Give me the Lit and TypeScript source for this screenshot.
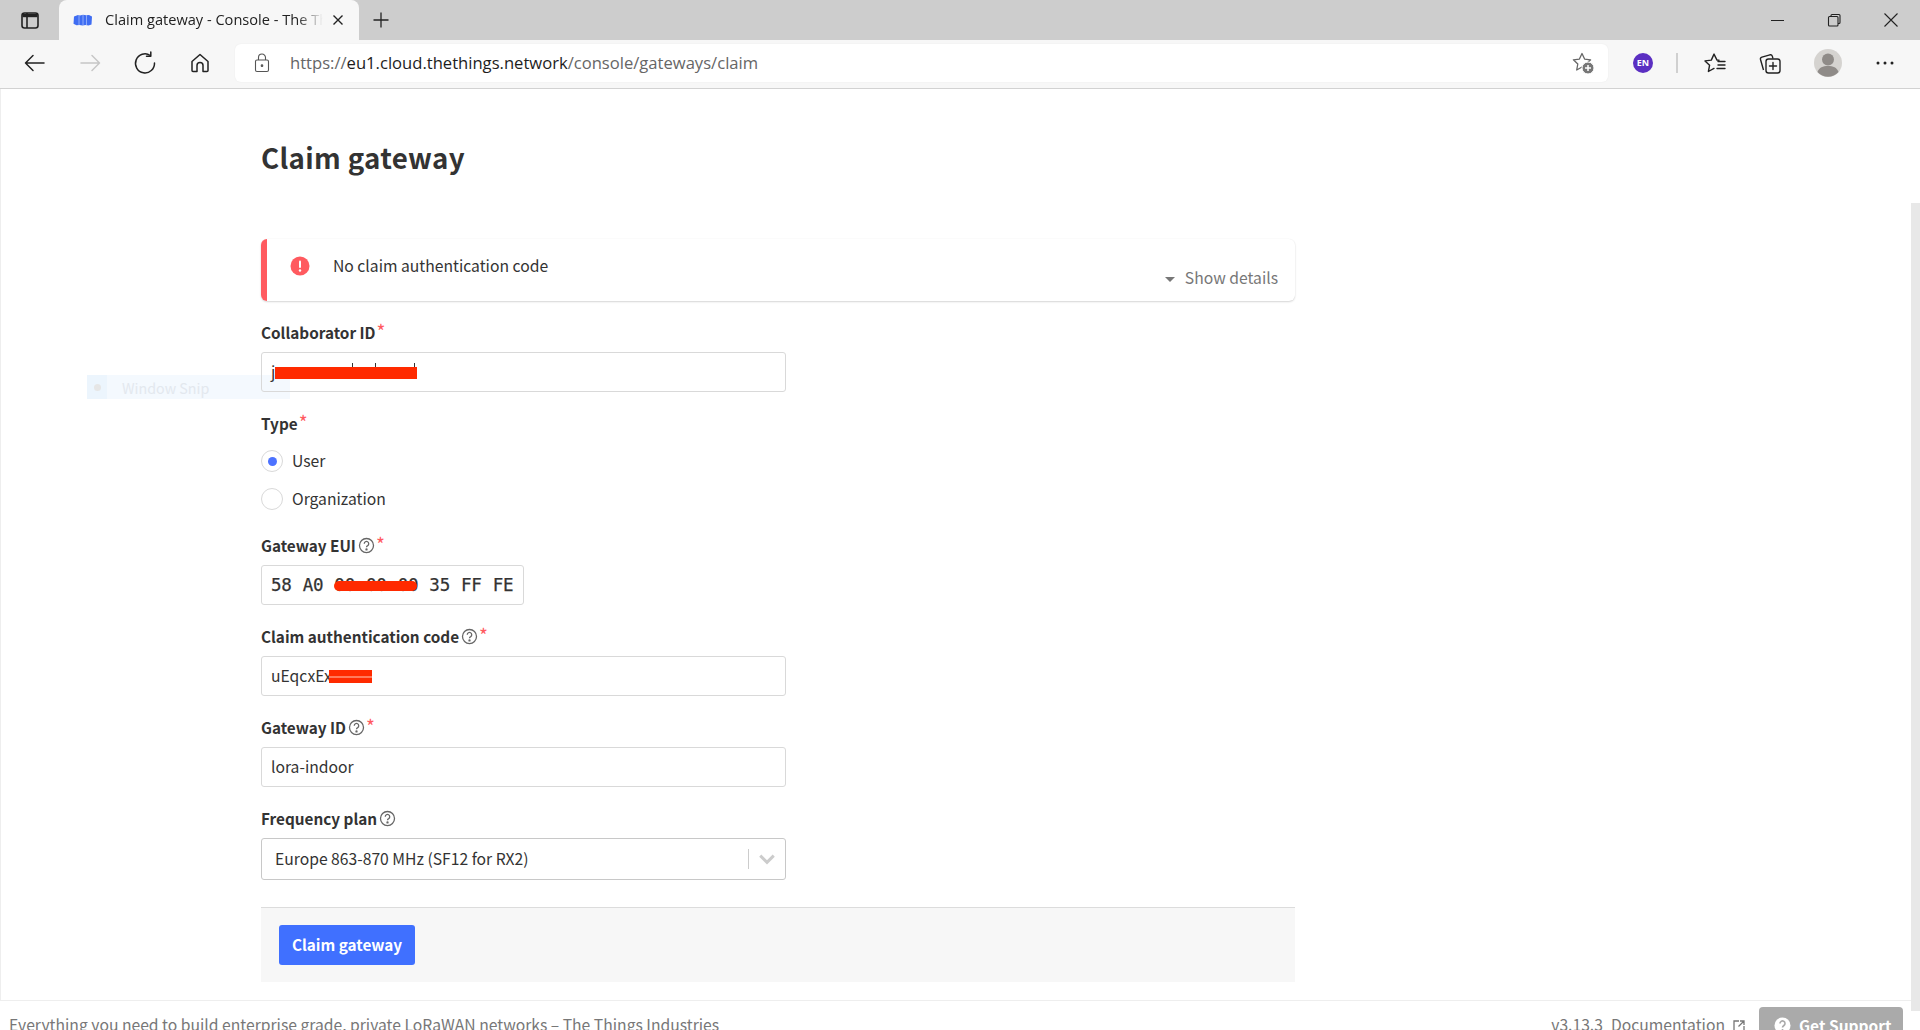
import { LitElement, html, css, svg } from "lit";
import { customElement } from "lit/decorators.js";

const helpIcon = html`<svg class="help" viewBox="0 0 16 16" fill="none" stroke="#666" stroke-width="1.200"><circle cx="8" cy="8" r="6.600"/><path d="M5.900 6.300a2.100 2.100 0 1 1 3.200 1.800c-.7.400-1.100.8-1.100 1.600"/><circle cx="8" cy="11.700" r=".5" fill="#666"/></svg>`;

const ic = (body: unknown, size = 24) => html`<svg width=${size} height=${size} viewBox="0 0 24 24" fill="none" stroke="#222" stroke-width="1.5" stroke-linecap="round" stroke-linejoin="round">${body}</svg>`;

@customElement("app-root")
export class AppRoot extends LitElement {
  static styles = css`
    :host { display: block; width: 1920px; height: 1030px; overflow: hidden; position: relative; background: #fff; font-family: "Noto Sans CJK SC", "Noto Sans", sans-serif; color: #333; }
    * { box-sizing: border-box; }
    .tabstrip { height: 40px; background: #cdcdcd; display: flex; align-items: stretch; }
    .sidebtn { width: 59px; display: flex; align-items: center; justify-content: center; }
    .tab { width: 300px; background: #f7f7f7; border-radius: 8px 8px 0 0; display: flex; align-items: center; padding-left: 14px; font: 14.600px/20px "Open Sans", "Noto Sans", sans-serif; color: #222; }
    .favicon { width: 20px; height: 12px; flex: none; }
    .tabtitle { margin-left: 12px; margin-top: -2px; width: 218px; white-space: nowrap; overflow: hidden; -webkit-mask-image: linear-gradient(90deg, #000 88%, transparent 100%); mask-image: linear-gradient(90deg, #000 88%, transparent 100%); }
    .tabclose { margin-left: 8px; display: flex; }
    .newtab { margin-left: 12px; width: 24px; display: flex; align-items: center; }
    .winctl { margin-left: auto; display: flex; align-items: center; padding-right: 1px; }
    .winctl div { width: 57px; display: flex; justify-content: center; }

    .toolbar { height: 49px; background: #f7f7f7; border-bottom: 1px solid #d2d2d2; display: flex; align-items: center; padding: 0 0 3px 12px; }
    .tb { width: 44px; height: 38px; display: flex; align-items: center; justify-content: center; flex: none; }
    .tb.g1 { margin-left: 13px; }
    .tb.g2 { margin-left: 10px; }
    .tb.g3 { margin-left: 11px; }
    .urlbox { margin-left: 13px; width: 1373px; height: 38px; background: #fff; border-radius: 6px; display: flex; align-items: center; padding-left: 18px; padding-right: 13px; box-shadow: 0 0 2px rgba(0,0,0,.06); }
    .url { margin-left: 19px; padding-top: 1px; font: 16.600px/22px "Open Sans", "Noto Sans", sans-serif; color: #666; white-space: nowrap; }
    .url b { font-weight: 400; color: #1d1d1d; }
    .star { margin-left: auto; display: flex; }
    .tools { display: flex; align-items: center; gap: 15px; margin-left: 15px; }
    .tool { width: 40px; display: flex; justify-content: center; align-items: center; }
    .en { width: 20px; height: 20px; border-radius: 50%; background: #5b2fc2; color: #fff; font: 700 9px/20px "Open Sans", sans-serif; text-align: center; }
    .divider { width: 2px; height: 20px; background: #d0d0d0; margin: 0 2px 0 -2px; }
    .av { margin-left: 3px; }
    .dots { margin-left: 2px; }

    .page { height: 911px; border-left: 1px solid #eee; padding: 0 0 0 260px; position: relative; }
    h1 { margin: 0; padding-top: 48px; height: 150px; font-size: 27.700px; line-height: 40px; font-weight: 600; letter-spacing: .35px; color: #333; }
    .column { width: 1034px; }
    .note { width: 1034px; height: 62px; border-left: 6px solid #ff5a5f; border-radius: 6px; box-shadow: 0 1px 2px rgba(0,0,0,.16), 0 0 1px rgba(0,0,0,.08); position: relative; display: flex; padding: 15px 0 0 23px; }
    .erricon { width: 20px; height: 20px; flex: none; margin-top: 2px; }
    .notetext { margin-left: 23px; font-size: 15.700px; line-height: 24px; color: #333; }
    .details { position: absolute; right: 17px; top: 28px; display: flex; align-items: center; font-size: 15.700px; line-height: 22px; color: #777; }
    .caret { width: 0; height: 0; border: 5px solid transparent; border-top: 5px solid #777; border-bottom: 0; margin-right: 10px; margin-top: 2px; }

    .field { margin-top: 21px; }
    .label { display: flex; align-items: center; height: 20px; margin-bottom: 10px; font-size: 15.300px; line-height: 20px; font-weight: 600; color: #333; }
    .help { width: 17px; height: 17px; margin-left: 2px; }
    .req { color: #ff5a5f; font-size: 19px; font-weight: 400; margin-left: 1px; position: relative; top: -1px; }
    .input { width: 525px; height: 40px; border: 1px solid #d9d9d9; border-radius: 3px; padding-left: 9px; font-size: 15.700px; line-height: 38px; color: #333; position: relative; z-index: 1; }
    .input.eui { width: 263px; display: flex; gap: 11px; font: 500 17.500px/38px "DejaVu Sans Mono", monospace; letter-spacing: -.2px; -webkit-text-stroke: .25px #333; }
    .mark { position: absolute; background: #ff2a00; }
    .m1 { left: 13px; top: 14px; width: 142px; height: 12px; }
    .tick { position: absolute; top: 10px; width: 1px; height: 4px; background: #333; }
    .t1 { left: 90px; }
    .t2 { left: 113px; }
    .t3 { left: 152px; }
    .m2 { left: 72px; top: 15px; width: 83px; height: 10px; border-radius: 5px; }
    .m3 { left: 67px; top: 13px; width: 43px; height: 13px; background: linear-gradient(#ff2a00 45%, #ff7a5c 45%, #ff7a5c 58%, #ff2a00 58%); }
    .radios { display: flex; flex-direction: column; gap: 16px; margin-top: 17px; margin-bottom: 25px; }
    .label.first { margin-bottom: 0; }
    .radio { display: flex; align-items: center; height: 22px; font-size: 15.700px; line-height: 22px; }
    .circle { width: 22px; height: 22px; border: 1px solid #d9d9d9; border-radius: 50%; margin-right: 9px; display: flex; align-items: center; justify-content: center; }
    .circle i { width: 9px; height: 9px; border-radius: 50%; background: #4c72ff; }
    .noflow { margin-top: 0; }
    .select { width: 525px; height: 42px; border: 1px solid #c8c8c8; border-radius: 3px; display: flex; align-items: center; padding-left: 13px; padding-bottom: 1px; font-size: 15.700px; color: #333; }
    .seltext { flex: 1; }
    .sep { width: 1px; height: 20px; background: #ccc; }
    .chev { width: 36px; display: flex; justify-content: center; }
    .actions { margin-top: 27px; height: 75px; background: #f7f7f7; border-top: 1px solid #dcdcdc; padding: 17px 0 0 18px; }
    .btn { width: 136px; height: 40px; background: #4070ff; color: #fff; border-radius: 3px; font-size: 15.300px; font-weight: 600; line-height: 38px; text-align: center; }

    .snip { position: absolute; left: 86px; top: 286px; width: 203px; height: 24px; background: rgba(220,236,252,.32); display: flex; align-items: center; color: #e3e8ee; font-size: 14.300px; pointer-events: none; }
    .snipicon { width: 20px; height: 24px; background: rgba(220,236,252,.3); display: flex; align-items: center; justify-content: center; margin-right: 15px; }
    .snipicon i { width: 7px; height: 7px; border-radius: 50%; background: #e6e6e6; }
    .scroll { position: absolute; right: 0; top: 114px; bottom: -11px; width: 9px; background: #e8e8e8; }

    .footer { height: 31px; border-top: 1px solid #eee; padding: 13px 17px 0 9px; display: flex; font-size: 15.700px; line-height: 22px; color: #777; overflow: hidden; }
    .foottext { flex: 1; white-space: nowrap; }
    .ver { margin-right: 8px; }
    .ext { width: 14px; height: 14px; margin: 5px 13px 0 7px; }
    .support { width: 144px; height: 40px; background: #aaa; color: #fff; font-weight: 700; border-radius: 4px; margin-top: -7px; display: flex; padding: 7px 0 0 15px; gap: 8px; font-size: 15.500px; }
    .support svg { margin-top: 3px; }
  `;

  private field(label: string, help: boolean, req: boolean, body: unknown) {
    return html`<div class="field">
      <div class="label">${label}${help ? helpIcon : ""}${req ? html`<span class="req">*</span>` : ""}</div>
      ${body}
    </div>`;
  }

  render() {
    return html`
      <div class="tabstrip">
        <div class="sidebtn">
          <svg width="20" height="20" viewBox="0 0 20 20" fill="none" stroke="#222" stroke-width="1.600"><rect x="2" y="3" width="16" height="15" rx="2.500"/><path d="M7 3v15"/><path d="M2.500 5.500h15" stroke-width="3.400"/></svg>
        </div>
        <div class="tab">
          <svg class="favicon" viewBox="0 0 20 12"><path d="M1 2.500 5 1l2 .5L10 .8l3 .5 3-.3 3 1.600-.5 8-3 .9-3-.5-3 .5-3-.6-3 .4-3-1.500z" fill="#3f6df2"/><path d="M6 1v10M10 1v10M13.500 1v10" stroke="#8fabf8" stroke-width="1"/></svg>
          <div class="tabtitle">Claim gateway - Console - The Things Network</div>
          <div class="tabclose"><svg width="14" height="14" viewBox="0 0 14 14" stroke="#222" stroke-width="1.400"><path d="M2.500 2.500l9 9M11.500 2.500l-9 9"/></svg></div>
        </div>
        <div class="newtab"><svg width="20" height="20" viewBox="0 0 20 20" stroke="#222" stroke-width="1.300"><path d="M10 2.500v15M2.500 10h15"/></svg></div>
        <div class="winctl">
          <div><svg width="16" height="16" viewBox="0 0 16 16" stroke="#222" stroke-width="1"><path d="M2 8.500h13"/></svg></div>
          <div><svg width="16" height="16" viewBox="0 0 16 16" fill="none" stroke="#222" stroke-width="1.100"><rect x="2.500" y="4.500" width="9.500" height="9.500" rx="1"/><path d="M5 4.500V3.500a1 1 0 0 1 1-1h7a1 1 0 0 1 1 1v7a1 1 0 0 1-1 1h-1"/></svg></div>
          <div><svg width="16" height="16" viewBox="0 0 16 16" stroke="#222" stroke-width="1.100"><path d="M1.500 1.500l13 13M14.500 1.500l-13 13"/></svg></div>
        </div>
      </div>

      <div class="toolbar">
        <div class="tb">${ic(svg`<path d="M22 12H3.500M11 4.500 3.500 12l7.500 7.500"/>`)}</div>
        <div class="tb g1">${html`<svg width="24" height="24" viewBox="0 0 24 24" fill="none" stroke="#c6c6c6" stroke-width="1.5" stroke-linecap="round" stroke-linejoin="round"><path d="M2 12h18.500M13 4.500l7.500 7.500-7.500 7.500"/></svg>`}</div>
        <div class="tb g2">${ic(svg`<path d="M17.300 4.500A9.500 9.500 0 1 0 21.500 12"/><path d="M17.800 1v4.300h-4.300"/>`)}</div>
        <div class="tb g3">${ic(svg`<path d="M4 10.500 12 3.500l8 7v9a1 1 0 0 1-1 1h-4v-6a3 3 0 0 0-6 0v6H5a1 1 0 0 1-1-1z"/>`)}</div>
        <div class="urlbox">
          <svg width="18" height="20" viewBox="0 0 18 20" fill="none" stroke="#555" stroke-width="1.100"><rect x="2.500" y="7" width="13" height="11.500" rx="1.500"/><path d="M5.500 7V4.500a3.500 3.500 0 0 1 7 0V7"/><circle cx="9" cy="12.700" r=".8" fill="#555"/></svg>
          <div class="url">https://<b>eu1.cloud.thethings.network</b>/console/gateways/claim</div>
          <div class="star"><svg width="24" height="24" viewBox="0 0 24 24"><path d="M11 2.500l2.600 5.600 6 .7-4.400 4.200 1.100 6-5.300-3-5.300 3 1.100-6L2.400 8.800l6-.7z" fill="none" stroke="#666" stroke-width="1.300" stroke-linejoin="round"/><circle cx="17" cy="17" r="6" fill="#777" stroke="#fff"/><path d="M17 14v6M14 17h6" stroke="#fff" stroke-width="1.500"/></svg></div>
        </div>
        <div class="tools">
          <div class="tool"><div class="en">EN</div></div>
          <div class="divider"></div>
          <div class="tool"><svg width="24" height="24" viewBox="0 0 24 24" fill="none" stroke="#222" stroke-width="1.400" stroke-linejoin="round" stroke-linecap="round"><path d="M16 9.300l-2-.2-3-6-2.700 6-6.300.8 4.600 4.300-1.200 6.300 5.600-3.100"/><path d="M15 10.500h7M15 14h7M14 17.500h8"/></svg></div>
          <div class="tool"><svg width="24" height="24" viewBox="0 0 24 24" fill="none" stroke="#222" stroke-width="1.400" stroke-linejoin="round"><rect x="8" y="8" width="14" height="14" rx="2.500"/><path d="M15 11.500v7M11.500 15h7" stroke-linecap="round"/><path d="M5.500 19 2.500 8.500a2 2 0 0 1 1.400-2.400l8-2.300a2 2 0 0 1 2.400 1.300l.7 2.500"/></svg></div>
          <div class="tool av"><svg width="28" height="28" viewBox="0 0 28 28"><circle cx="14" cy="14" r="14" fill="#d5d3d0"/><circle cx="14" cy="10.500" r="6" fill="#8f8b88"/><path d="M3.500 23c1.500-4.500 5.500-6 10.500-6s9 1.500 10.500 6a14 14 0 0 1-21 0z" fill="#8f8b88"/></svg></div>
          <div class="tool dots"><svg width="20" height="6" viewBox="0 0 20 6" fill="#222"><circle cx="3" cy="3" r="1.500"/><circle cx="10" cy="3" r="1.500"/><circle cx="17" cy="3" r="1.500"/></svg></div>
        </div>
      </div>

      <div class="page">
        <div class="column">
          <h1>Claim gateway</h1>
          <div class="note">
            <svg class="erricon" viewBox="0 0 20 20"><circle cx="10" cy="10" r="9.500" fill="#ff5a5f"/><rect x="9" y="4.500" width="2" height="7.500" rx="1" fill="#fff"/><circle cx="10" cy="14.500" r="1.200" fill="#fff"/></svg>
            <div class="notetext">No claim authentication code</div>
            <div class="details"><span class="caret"></span>Show details</div>
          </div>
          ${this.field("Collaborator ID", false, true, html`<div class="input">j<span class="tick t1"></span><span class="tick t2"></span><span class="tick t3"></span><span class="mark m1"></span></div>`)}
          <div class="field">
            <div class="label first">Type<span class="req">*</span></div>
            <div class="radios">
              <div class="radio"><span class="circle"><i></i></span>User</div>
              <div class="radio"><span class="circle"></span>Organization</div>
            </div>
          </div>
          <div class="noflow">
            <div class="label">Gateway EUI${helpIcon}<span class="req">*</span></div>
            <div class="input eui"><span>58</span><span>A0</span><span>00</span><span>00</span><span>00</span><span>35</span><span>FF</span><span>FE</span><span class="mark m2"></span></div>
          </div>
          ${this.field("Claim authentication code", true, true, html`<div class="input">uEqcxEx<span class="mark m3"></span></div>`)}
          ${this.field("Gateway ID", true, true, html`<div class="input">lora-indoor</div>`)}
          ${this.field("Frequency plan", true, false, html`<div class="select"><span class="seltext">Europe 863-870 MHz (SF12 for RX2)</span><span class="sep"></span><span class="chev"><svg width="18" height="18" viewBox="0 0 16 16" fill="none" stroke="#ccc" stroke-width="2.600"><path d="M2 5l6 6 6-6"/></svg></span></div>`)}
          <div class="actions"><div class="btn">Claim gateway</div></div>
        </div>
        <div class="snip"><span class="snipicon"><i></i></span>Window Snip</div>
        <div class="scroll"></div>
      </div>

      <div class="footer">
        <div class="foottext">Everything you need to build enterprise grade, private LoRaWAN networks – The Things Industries</div>
        <span class="ver">v3.13.3</span><span>Documentation</span>
        <svg class="ext" viewBox="0 0 14 14" fill="none" stroke="#777" stroke-width="1.300"><path d="M7 2H2v10h10V7M8 2h4v4M12 2 6.500 7.500"/></svg>
        <div class="support"><svg width="17" height="17" viewBox="0 0 17 17"><circle cx="8.500" cy="8.500" r="8" fill="#fff"/><path d="M6 6.500a2.500 2.500 0 1 1 3.900 2c-.9.600-1.400 1-1.400 2" fill="none" stroke="#aaa" stroke-width="1.600"/><circle cx="8.500" cy="13" r="1" fill="#aaa"/></svg>Get Support</div>
      </div>
    `;
  }
}
